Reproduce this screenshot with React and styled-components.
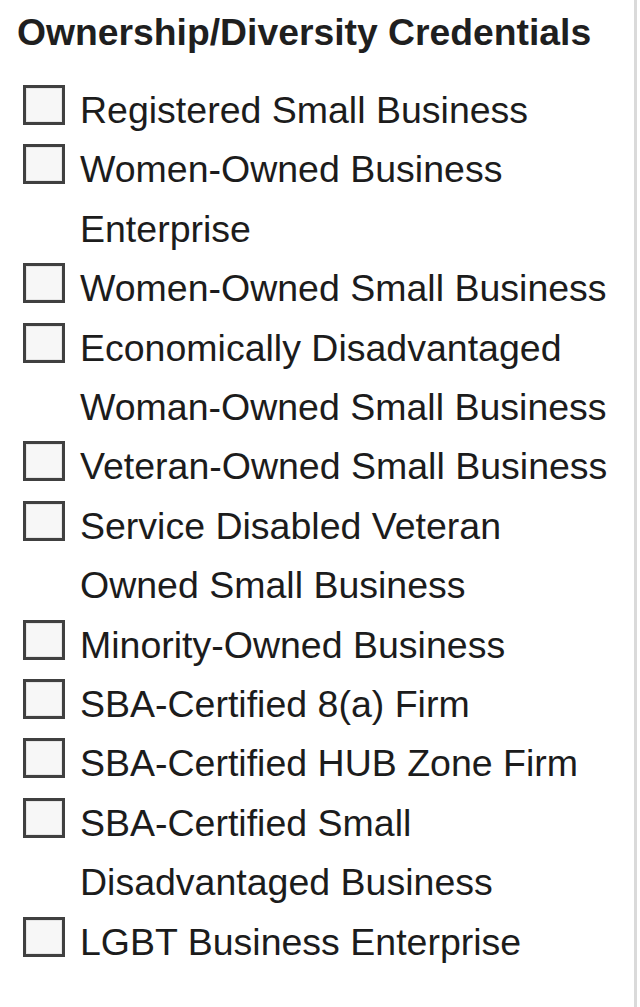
import React from 'react'
import styled, { createGlobalStyle } from 'styled-components'

const GlobalStyle = createGlobalStyle`
	html, body {
		margin: 0;
		padding: 0;
		background: #fff;
	}
	body {
		font-family: 'Liberation Sans', Arial, sans-serif;
	}
`

const Panel = styled.div`
	width: 637px;
	min-height: 1007px;
	box-sizing: border-box;
	border-right: 3px solid #dadada;
	padding: 11px 0 0 17px;
	background: #fff;
`

const Title = styled.h3`
	margin: 0 0 27px;
	font-size: 37.3px;
	line-height: 43px;
	font-weight: 700;
	color: #1f1f1f;
	white-space: nowrap;
`

const List = styled.div`
	display: flex;
	flex-direction: column;
	padding-left: 6px;
`

const Row = styled.label`
	display: flex;
	align-items: flex-start;
	gap: 15px;
	cursor: pointer;
`

// plain square checkbox with a dark frame and a pale inset
const Box = styled.input.attrs({ type: 'checkbox' })`
	appearance: none;
	flex: none;
	width: 42px;
	height: 40px;
	margin: 4px 0 0;
	box-sizing: border-box;
	border: 3px solid #404040;
	background: #f7f7f7;
	box-shadow: inset 0 0 0 1px #e6e6e6;
	cursor: pointer;
	&:checked {
		background: #404040;
	}
`

const Label = styled.span`
	width: 540px;
	font-size: 37.5px;
	line-height: 59.4px;
	color: #1c1c1c;
`

const credentials = [
	'Registered Small Business',
	'Women-Owned Business Enterprise',
	'Women-Owned Small Business',
	'Economically Disadvantaged Woman-Owned Small Business',
	'Veteran-Owned Small Business',
	'Service Disabled Veteran Owned Small Business',
	'Minority-Owned Business',
	'SBA-Certified 8(a) Firm',
	'SBA-Certified HUB Zone Firm',
	'SBA-Certified Small Disadvantaged Business',
	'LGBT Business Enterprise',
]

export default function App() {
	return (
		<>
			<GlobalStyle />
			<Panel>
				<Title>Ownership/Diversity Credentials</Title>
				<List>
					{credentials.map((name) => (
						<Row key={name}>
							<Box />
							<Label>{name}</Label>
						</Row>
					))}
				</List>
			</Panel>
		</>
	)
}
